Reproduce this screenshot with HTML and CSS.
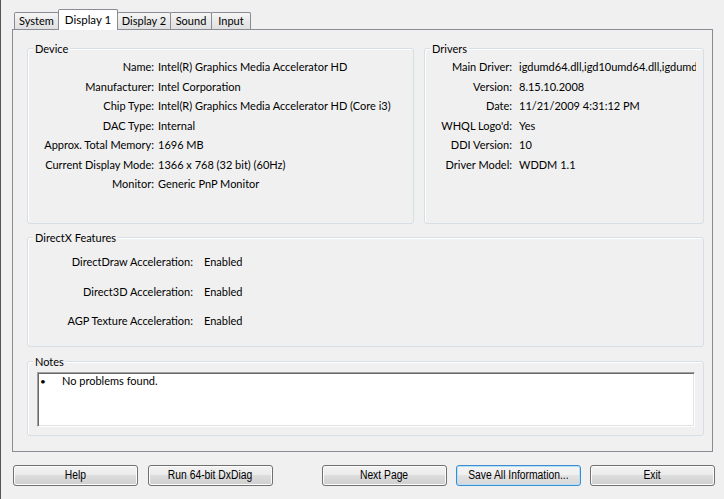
FILE: index.html
```html
<!DOCTYPE html>
<html>
<head>
<meta charset="utf-8">
<title>DirectX Diagnostic Tool</title>
<link rel="stylesheet" href="styles.css">
</head>
<body>
<div class="window">
  <div class="tabs">
    <div class="tab tab-system">System</div>
    <div class="tab tab-display1 active">Display 1</div>
    <div class="tab tab-display2">Display 2</div>
    <div class="tab tab-sound">Sound</div>
    <div class="tab tab-input">Input</div>
  </div>
  <div class="panel">
    <div class="top-row">
      <section class="group device">
        <div class="group-title">Device</div>
        <div class="rows">
          <div class="row"><span class="label">Name:</span><span class="value">Intel(R) Graphics Media Accelerator HD</span></div>
          <div class="row"><span class="label">Manufacturer:</span><span class="value">Intel Corporation</span></div>
          <div class="row"><span class="label">Chip Type:</span><span class="value">Intel(R) Graphics Media Accelerator HD (Core i3)</span></div>
          <div class="row"><span class="label">DAC Type:</span><span class="value">Internal</span></div>
          <div class="row"><span class="label">Approx. Total Memory:</span><span class="value">1696 MB</span></div>
          <div class="row"><span class="label">Current Display Mode:</span><span class="value">1366 x 768 (32 bit) (60Hz)</span></div>
          <div class="row"><span class="label">Monitor:</span><span class="value">Generic PnP Monitor</span></div>
        </div>
      </section>
      <section class="group drivers">
        <div class="group-title">Drivers</div>
        <div class="rows">
          <div class="row"><span class="label">Main Driver:</span><span class="value">igdumd64.dll,igd10umd64.dll,igdumd32.dll,igd10umd32.dll</span></div>
          <div class="row"><span class="label">Version:</span><span class="value">8.15.10.2008</span></div>
          <div class="row"><span class="label">Date:</span><span class="value">11/21/2009 4:31:12 PM</span></div>
          <div class="row"><span class="label">WHQL Logo'd:</span><span class="value">Yes</span></div>
          <div class="row"><span class="label">DDI Version:</span><span class="value">10</span></div>
          <div class="row"><span class="label">Driver Model:</span><span class="value">WDDM 1.1</span></div>
        </div>
      </section>
    </div>
    <section class="group features">
      <div class="group-title">DirectX Features</div>
      <div class="rows">
        <div class="row"><span class="label">DirectDraw Acceleration:</span><span class="value">Enabled</span></div>
        <div class="row"><span class="label">Direct3D Acceleration:</span><span class="value">Enabled</span></div>
        <div class="row"><span class="label">AGP Texture Acceleration:</span><span class="value">Enabled</span></div>
      </div>
    </section>
    <section class="group notes">
      <div class="group-title">Notes</div>
      <div class="textbox">
        <div class="note"><span class="bullet">•</span><span>No problems found.</span></div>
      </div>
    </section>
  </div>
  <div class="buttons">
    <div class="btn-group left">
      <button class="btn"><span class="btn-text">Help</span></button>
      <button class="btn"><span class="btn-text">Run 64-bit DxDiag</span></button>
    </div>
    <div class="btn-group right">
      <button class="btn"><span class="btn-text">Next Page</span></button>
      <button class="btn default"><span class="btn-text">Save All Information...</span></button>
      <button class="btn"><span class="btn-text">Exit</span></button>
    </div>
  </div>
</div>
</body>
</html>
```
FILE: styles.css
```css
html, body {
  margin: 0;
  padding: 0;
  background: #f0f0f0;
}

body {
  font-family: "Segoe UI", Lato, "Liberation Sans", sans-serif;
  font-size: 11px;
  color: #000;
}

.window {
  box-sizing: border-box;
  width: 724px;
  height: 499px;
  overflow: hidden;
  border-left: 1px solid #555;
  padding-left: 11px;
}

/* Tabs */
.tabs {
  position: relative;
  z-index: 1;
  display: flex;
  align-items: flex-end;
  height: 20px;
  padding: 9px 0 0 2px;
}

.tab {
  box-sizing: border-box;
  height: 17px;
  border: 1px solid #898c95;
  border-bottom: 0;
  border-radius: 2px 2px 0 0;
  margin-right: -1px;
  background: linear-gradient(#f6f6f6, #e9e9e9 50%, #e0e0e0);
  text-align: center;
  line-height: 15px;
  white-space: nowrap;
}

.tab-system { width: 45px; }
.tab-display1 { width: 60px; }
.tab-display2 { width: 54px; }
.tab-sound { width: 42px; }
.tab-input { width: 40px; }

.tab.active {
  height: 21px;
  margin-bottom: -1px;
  background: #fff;
  line-height: 19px;
  font-size: 11.5px;
}

/* Panel */
.panel {
  box-sizing: border-box;
  width: 701px;
  height: 423px;
  border: 1px solid #898c95;
  background: #f0f0f0;
  padding: 18px 8px 0 14px;
}

.top-row {
  display: flex;
  gap: 10px;
}

.group {
  position: relative;
  box-sizing: border-box;
  border: 1px solid #d5dfe5;
  border-radius: 3px;
  box-shadow: inset 1px 1px 0 #fff;
}

.group-title {
  position: absolute;
  top: -8px;
  left: 5px;
  padding: 0 2px;
  line-height: 15px;
  background: #f0f0f0;
}

.device { width: 387px; height: 176px; }
.drivers { width: 280px; height: 176px; }

.rows { padding-top: 8px; }

.row {
  display: flex;
  line-height: 19.5px;
  white-space: nowrap;
}

.label { text-align: right; flex: none; }
.value { flex: none; }

.device .label { width: 126px; }
.device .value { margin-left: 4px; }

.drivers .label { width: 87px; }
.drivers .value { margin-left: 7px; width: 177px; overflow: hidden; }

.features { margin-top: 13px; height: 110px; }
.features .rows { padding-top: 9px; }
.features .row { line-height: 29.5px; }
.features .label { width: 165px; }
.features .value { margin-left: 11px; }

.notes {
  margin-top: 14px;
  height: 75px;
  padding: 10px 8px 0 9px;
}

.textbox {
  box-sizing: border-box;
  height: 55px;
  background: #fff;
  border: 1px solid;
  border-color: #a0a0a0 #fff #fff #a0a0a0;
  box-shadow: inset 1px 1px 0 #696969, inset -1px -1px 0 #e3e3e3;
  padding: 1px 0 0 2px;
}

.note {
  display: flex;
  line-height: 14px;
}

.bullet {
  width: 22px;
  flex: none;
  font-size: 10px;
}

/* Buttons */
.buttons {
  display: flex;
  justify-content: space-between;
  width: 702px;
  margin: 13px 0 0 1px;
}

.btn-group { display: flex; }
.btn-group.left { gap: 10px; }
.btn-group.right { gap: 9px; }

.btn {
  box-sizing: border-box;
  width: 125px;
  height: 21px;
  padding: 0;
  border: 1px solid #707070;
  border-radius: 3px;
  background: linear-gradient(#f2f2f2 0%, #ebebeb 49%, #dddddd 50%, #cfcfcf 100%);
  box-shadow: inset 0 0 0 1px #fcfcfc;
  font-family: "Liberation Sans", Arial, sans-serif;
  font-size: 12px;
  color: #000;
  line-height: 19px;
  text-align: center;
  white-space: nowrap;
}

.btn-text {
  display: inline-block;
  transform: scaleX(0.86);
}

.btn.default {
  border-color: #3c8bd0;
  background: linear-gradient(#f4f4f4 0%, #efefef 49%, #e3e3e3 50%, #d7d7d7 100%);
  box-shadow: inset 0 0 0 1px #b6e2f8;
}
```
